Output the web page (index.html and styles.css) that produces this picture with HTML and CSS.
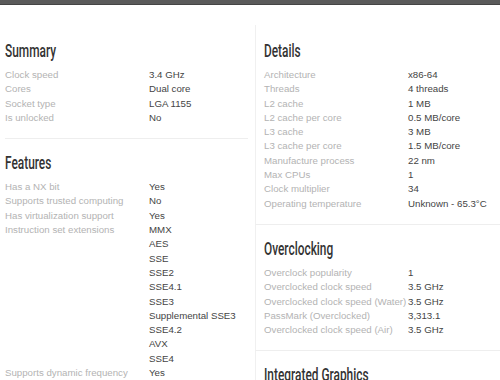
FILE: index.html
```html
<!DOCTYPE html>
<html>
<head>
<meta charset="utf-8">
<link rel="stylesheet" href="styles.css">
</head>
<body>
<div class="topbar"></div>
<div class="page">
  <div class="col col-left">
    <section class="card">
      <h2><span class="ht">Summary</span></h2>
      <div class="rows">
        <span class="k">Clock speed</span><span class="v">3.4 GHz</span>
        <span class="k">Cores</span><span class="v">Dual core</span>
        <span class="k">Socket type</span><span class="v">LGA 1155</span>
        <span class="k">Is unlocked</span><span class="v">No</span>
      </div>
    </section>
    <section class="card">
      <h2><span class="ht">Features</span></h2>
      <div class="rows">
        <span class="k">Has a NX bit</span><span class="v">Yes</span>
        <span class="k">Supports trusted computing</span><span class="v">No</span>
        <span class="k">Has virtualization support</span><span class="v">Yes</span>
        <span class="k">Instruction set extensions</span>
        <span class="v list"><span>MMX</span><span>AES</span><span>SSE</span><span>SSE2</span><span>SSE4.1</span><span>SSE3</span><span>Supplemental SSE3</span><span>SSE4.2</span><span>AVX</span><span>SSE4</span></span>
        <span class="k">Supports dynamic frequency</span><span class="v">Yes</span>
      </div>
    </section>
  </div>
  <div class="col col-right">
    <section class="card">
      <h2><span class="ht">Details</span></h2>
      <div class="rows">
        <span class="k">Architecture</span><span class="v">x86-64</span>
        <span class="k">Threads</span><span class="v">4 threads</span>
        <span class="k">L2 cache</span><span class="v">1 MB</span>
        <span class="k">L2 cache per core</span><span class="v">0.5 MB/core</span>
        <span class="k">L3 cache</span><span class="v">3 MB</span>
        <span class="k">L3 cache per core</span><span class="v">1.5 MB/core</span>
        <span class="k">Manufacture process</span><span class="v">22 nm</span>
        <span class="k">Max CPUs</span><span class="v">1</span>
        <span class="k">Clock multiplier</span><span class="v">34</span>
        <span class="k">Operating temperature</span><span class="v">Unknown - 65.3°C</span>
      </div>
    </section>
    <section class="card">
      <h2><span class="ht">Overclocking</span></h2>
      <div class="rows">
        <span class="k">Overclock popularity</span><span class="v">1</span>
        <span class="k">Overclocked clock speed</span><span class="v">3.5 GHz</span>
        <span class="k">Overclocked clock speed (Water)</span><span class="v">3.5 GHz</span>
        <span class="k">PassMark (Overclocked)</span><span class="v">3,313.1</span>
        <span class="k">Overclocked clock speed (Air)</span><span class="v">3.5 GHz</span>
      </div>
    </section>
    <section class="card">
      <h2><span class="ht">Integrated Graphics</span></h2>
    </section>
  </div>
</div>
</body>
</html>
```

FILE: styles.css
```css
html, body {
  margin: 0;
  padding: 0;
  background: #fff;
  overflow: hidden;
}
body {
  font-family: "Liberation Sans", Arial, sans-serif;
  font-size: 9.7px;
  color: #444;
  width: 500px;
  height: 380px;
}
.topbar {
  height: 5px;
  background: #5a5a5a;
  border-bottom: 1px solid #444;
  box-sizing: border-box;
}
.page {
  display: flex;
  margin-top: 20px;
}
.col-left {
  width: 255px;
  flex: none;
  padding-left: 5px;
  padding-right: 7px;
  box-sizing: border-box;
}
.col-right {
  flex: 1;
}
.col-right .card {
  border-left: 1px solid #f0f0f0;
  padding-left: 8px;
}
.card {
  padding-top: 16px;
  padding-bottom: 13px;
  border-bottom: 1px solid #eeeeee;
}
.card + .card {
  padding-top: 14px;
}
h2 {
  margin: 0 0 7px 0;
  font-family: Roboto, "Liberation Sans", sans-serif;
  font-weight: 500;
  font-size: 18px;
  line-height: 20px;
  color: #333;
  white-space: nowrap;
}
.ht {
  display: inline-block;
  transform: scaleX(0.66);
  transform-origin: left center;
}
.rows {
  display: grid;
  grid-template-columns: 144px 1fr;
  line-height: 14.3px;
}
.k {
  color: #b3b3b3;
  white-space: nowrap;
}
.v {
  color: #444;
  white-space: nowrap;
}
.list {
  display: flex;
  flex-direction: column;
}
```
